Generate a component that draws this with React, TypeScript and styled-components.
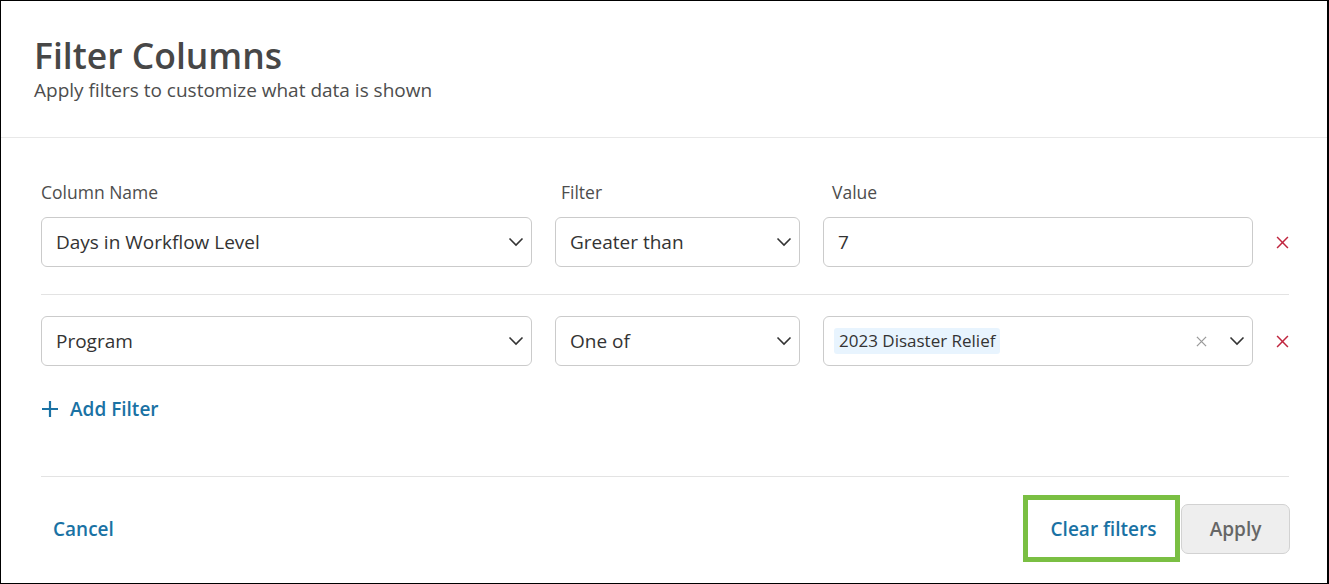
import React from "react";
import styled, { createGlobalStyle } from "styled-components";

const GlobalStyle = createGlobalStyle`
  body {
    margin: 0;
    font-family: "Open Sans", "Noto Sans", sans-serif;
    background: #fff;
  }
`;

const Frame = styled.div`
  width: 1329px;
  height: 584px;
  box-sizing: border-box;
  border: 1px solid #000;
  border-right-width: 2px;
  display: flex;
  flex-direction: column;
  background: #fff;
`;

const Header = styled.header`
  box-sizing: border-box;
  height: 137px;
  padding: 32px 33px 0;
  border-bottom: 1px solid #e8e8e8;
`;

const Title = styled.h1`
  margin: 0;
  font-size: 35.5px;
  font-weight: 600;
  line-height: 44px;
  color: #474747;
`;

const Subtitle = styled.p`
  margin: 0;
  font-size: 19px;
  line-height: 26px;
  color: #4d4d4d;
`;

const Body = styled.div`
  padding: 43px 38px 0 40px;
`;

const Grid = styled.div`
  display: grid;
  grid-template-columns: 491px 245px 430px 1fr;
  column-gap: 23px;
  align-items: center;
`;

const Label = styled.div<{ $indent?: number }>`
  font-size: 17.5px;
  line-height: 22px;
  color: #4d4d4d;
  margin-bottom: 14px;
  padding-left: ${(p) => p.$indent ?? 0}px;
`;

const Field = styled.div<{ $pad?: number }>`
  box-sizing: border-box;
  height: 50px;
  border: 1px solid #cbcbcb;
  border-radius: 6px;
  display: flex;
  align-items: center;
  padding: 0 7px 0 ${(p) => p.$pad ?? 14}px;
  font-size: 19px;
  color: #333;
  background: #fff;
`;

const FieldText = styled.span`
  flex: 1;
`;

const Chip = styled.span`
  background: #e8f4fe;
  border-radius: 3px;
  padding: 0 5px;
  font-size: 17px;
  line-height: 26px;
  color: #333;
`;

const Spacer = styled.span`
  flex: 1;
`;

const IconSlot = styled.span<{ $gap?: number }>`
  display: inline-flex;
  margin-left: ${(p) => p.$gap ?? 0}px;
`;

const Remove = styled.button`
  border: 0;
  background: none;
  padding: 0;
  justify-self: end;
  display: inline-flex;
  margin-right: 1px;
  cursor: pointer;
`;

const Divider = styled.hr<{ $top: number; $bottom: number }>`
  border: 0;
  border-top: 1px solid #e3e3e3;
  margin: ${(p) => p.$top}px 0 ${(p) => p.$bottom}px;
`;

const AddButton = styled.button`
  display: inline-flex;
  align-items: center;
  gap: 11px;
  border: 0;
  background: none;
  padding: 0;
  margin-top: 31px;
  font-family: inherit;
  font-size: 19px;
  font-weight: 600;
  line-height: 24px;
  color: #1a72a4;
`;

const Footer = styled.footer`
  display: flex;
  align-items: center;
  padding: 18px 37px 0 40px;
`;

const LinkButton = styled.button`
  border: 0;
  background: none;
  font-family: inherit;
  font-size: 19px;
  font-weight: 600;
  color: #1a72a4;
  padding: 0 12px;
  height: 50px;
`;

const ClearButton = styled(LinkButton)`
  box-sizing: border-box;
  margin-left: auto;
  width: 157px;
  height: 67px;
  border: 5px solid #7abf43;
  padding: 0 0 0 4px;
  margin-right: 1px;
`;

const ApplyButton = styled.button`
  box-sizing: border-box;
  width: 109px;
  height: 50px;
  border: 1px solid #d2d2d2;
  border-radius: 7px;
  background: #eeeeee;
  font-family: inherit;
  font-size: 19px;
  font-weight: 600;
  color: #666;
`;

const Chevron = () => (
  <svg width="16" height="10" viewBox="0 0 16 10" fill="none">
    <path d="M1.5 1.5 L8 8 L14.5 1.5" stroke="#333" strokeWidth="1.6" />
  </svg>
);

const SmallX = ({ color, size }: { color: string; size: number }) => (
  <svg width={size} height={size} viewBox="0 0 12 12" fill="none">
    <path d="M1 1 L11 11 M11 1 L1 11" stroke={color} strokeWidth="1.4" />
  </svg>
);

const Plus = () => (
  <svg width="18" height="18" viewBox="0 0 18 18" fill="none">
    <path d="M9 1 V17 M1 9 H17" stroke="#1a72a4" strokeWidth="2.2" />
  </svg>
);

const SelectBox = ({ value }: { value: string }) => (
  <Field>
    <FieldText>{value}</FieldText>
    <Chevron />
  </Field>
);

const App: React.FC = () => {
  return (
    <>
      <GlobalStyle />
      <Frame>
        <Header>
          <Title>Filter Columns</Title>
          <Subtitle>Apply filters to customize what data is shown</Subtitle>
        </Header>
        <Body>
          <Grid>
            <Label>Column Name</Label>
            <Label $indent={6}>Filter</Label>
            <Label $indent={9}>Value</Label>
            <span />
            <SelectBox value="Days in Workflow Level" />
            <SelectBox value="Greater than" />
            <Field>
              <FieldText>7</FieldText>
            </Field>
            <Remove aria-label="Remove filter">
              <SmallX color="#c0263f" size={13} />
            </Remove>
          </Grid>
          <Divider $top={27} $bottom={21} />
          <Grid>
            <SelectBox value="Program" />
            <SelectBox value="One of" />
            <Field $pad={10}>
              <Chip>2023 Disaster Relief</Chip>
              <Spacer />
              <IconSlot>
                <SmallX color="#9a9a9a" size={11} />
              </IconSlot>
              <IconSlot $gap={22}>
                <Chevron />
              </IconSlot>
            </Field>
            <Remove aria-label="Remove filter">
              <SmallX color="#c0263f" size={13} />
            </Remove>
          </Grid>
          <AddButton>
            <Plus />
            Add Filter
          </AddButton>
          <Divider $top={53} $bottom={0} />
        </Body>
        <Footer>
          <LinkButton>Cancel</LinkButton>
          <ClearButton>Clear filters</ClearButton>
          <ApplyButton>Apply</ApplyButton>
        </Footer>
      </Frame>
    </>
  );
};

export default App;
